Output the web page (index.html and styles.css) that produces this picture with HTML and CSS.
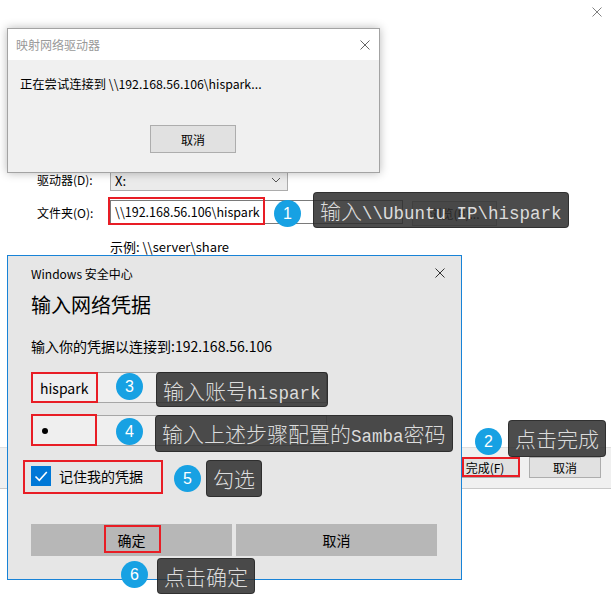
FILE: index.html
```html
<!DOCTYPE html>
<html lang="zh-CN">
<head>
<meta charset="utf-8">
<title>映射网络驱动器</title>
<link rel="stylesheet" href="styles.css">
</head>
<body>
<div class="wizard">
  <div class="wiz-titlebar">
    <svg class="x-icon" viewBox="0 0 10 10"><path d="M0.5 0.5 L9.5 9.5 M9.5 0.5 L0.5 9.5" stroke="#808080" stroke-width="1" fill="none"/></svg>
  </div>
  <div class="wiz-content">
    <div class="wiz-row drive-row">
      <span class="wiz-label">驱动器(D):</span>
      <div class="select"><span>X:</span><svg class="chev" viewBox="0 0 10 6"><path d="M1 1 L5 5 L9 1" stroke="#555" stroke-width="1" fill="none"/></svg></div>
    </div>
    <div class="wiz-row folder-row">
      <span class="wiz-label folder-label">文件夹(O):</span>
      <div class="folder-input">\\192.168.56.106\hispark</div>
      <div class="win-btn browse">浏览(B)...</div>
    </div>
    <div class="wiz-example">示例: \\server\share</div>
  </div>
  <div class="wiz-footer">
    <div class="win-btn foot-btn finish-btn">完成(F)</div>
    <div class="win-btn foot-btn">取消</div>
  </div>
</div>

<div class="connect-dialog">
  <div class="cd-titlebar">
    <span>映射网络驱动器</span>
    <svg class="x-icon" viewBox="0 0 10 10"><path d="M0.5 0.5 L9.5 9.5 M9.5 0.5 L0.5 9.5" stroke="#666" stroke-width="1" fill="none"/></svg>
  </div>
  <div class="cd-body">
    <div class="cd-msg">正在尝试连接到 \\192.168.56.106\hispark...</div>
    <div class="win-btn cd-btn">取消</div>
  </div>
</div>

<div class="cred">
  <div class="cred-title-row">
    <span>Windows 安全中心</span>
    <svg class="x-icon" viewBox="0 0 10 10"><path d="M0.5 0.5 L9.5 9.5 M9.5 0.5 L0.5 9.5" stroke="#333" stroke-width="1" fill="none"/></svg>
  </div>
  <div class="cred-heading">输入网络凭据</div>
  <div class="cred-sub">输入你的凭据以连接到:192.168.56.106</div>
  <div class="cred-input">hispark</div>
  <div class="cred-input"><span class="pw-dot"></span></div>
  <div class="remember">
    <svg class="checkbox" viewBox="0 0 20 20"><rect width="20" height="20" fill="#0078d7"/><path d="M4.5 10.5 L8.3 14.3 L15.8 6" stroke="#fff" stroke-width="1.6" fill="none"/></svg>
    <span>记住我的凭据</span>
  </div>
  <div class="cred-buttons">
    <div class="cred-btn">确定</div>
    <div class="cred-btn">取消</div>
  </div>
</div>

<div class="mark mark-folder"></div>
<div class="mark mark-user"></div>
<div class="mark mark-pw"></div>
<div class="mark mark-finish"></div>
<div class="mark mark-remember"></div>
<div class="mark mark-ok"></div>

<div class="badge badge-1">1</div>
<div class="badge badge-2">2</div>
<div class="badge badge-3">3</div>
<div class="badge badge-4">4</div>
<div class="badge badge-5">5</div>
<div class="badge badge-6">6</div>

<div class="tip tip-1">输入<span class="lat">\\Ubuntu IP\hispark</span></div>
<div class="tip tip-2">点击完成</div>
<div class="tip tip-3">输入账号<span class="lat">hispark</span></div>
<div class="tip tip-4">输入上述步骤配置的<span class="lat">Samba</span>密码</div>
<div class="tip tip-5">勾选</div>
<div class="tip tip-6">点击确定</div>
</body>
</html>
```
FILE: styles.css
```css
* { box-sizing: border-box; }
html, body { margin: 0; padding: 0; }
body {
  width: 611px;
  height: 606px;
  overflow: hidden;
  position: relative;
  background: #fff;
  color: #000;
  font-family: "Noto Sans CJK SC", "Noto Sans", sans-serif;
}
.x-icon { width: 10px; height: 10px; display: block; }

/* background wizard window */
.wizard { width: 611px; height: 489px; display: flex; flex-direction: column; }
.wiz-titlebar { height: 24px; display: flex; justify-content: flex-end; align-items: center; padding-right: 9px; }
.wiz-content { padding: 145px 0 0 37px; font-size: 12px; display: flex; flex-direction: column; }
.wiz-row { display: flex; align-items: flex-start; }
.wiz-label { width: 73px; line-height: 22px; }
.select {
  width: 178px; height: 22px;
  border: 1px solid #acacac; background: #ebebeb;
  display: flex; justify-content: space-between; align-items: center;
  padding: 0 6px 0 4px; font-size: 13px;
}
.chev { width: 10px; height: 6px; display: block; }
.folder-row { margin-top: 9px; }
.folder-label { line-height: 24px; padding-top: 1px; }
.folder-input {
  width: 293px; height: 24px;
  border: 1px solid #7a7a7a; background: #fff;
  font-size: 12.5px; line-height: 22px; padding-left: 4px;
}
.win-btn {
  background: #e1e1e1; border: 1px solid #adadad;
  display: flex; align-items: center; justify-content: center;
  font-size: 12px;
}
.browse { margin-left: 9px; margin-top: 1px; width: 85px; height: 25px; }
.wiz-example { margin-top: 12px; padding-left: 73px; line-height: 18px; font-size: 13px; }
.wiz-footer {
  margin-top: auto; height: 42px;
  background: #f0f0f0;
  border-top: 1px solid #dfdfdf; border-bottom: 1px solid #c9c9c9;
  display: flex; justify-content: flex-end; align-items: flex-start; gap: 9px;
  padding: 9px 10px 0 0;
}
.foot-btn { width: 72px; height: 21px; }
.finish-btn { width: 70px; }

/* connecting dialog */
.connect-dialog {
  position: absolute; left: 7px; top: 28px;
  width: 373px; height: 145px;
  border: 1px solid #a3a3a3;
  box-shadow: 0 0 9px rgba(0,0,0,0.28);
  display: flex; flex-direction: column;
  background: #f0f0f0;
}
.cd-titlebar {
  height: 31px; background: #fff;
  display: flex; justify-content: space-between; align-items: center;
  padding: 0 9px 0 8px; font-size: 12px; color: #999;
}
.cd-body { flex: 1; padding: 15px 0 0 12px; display: flex; flex-direction: column; }
.cd-msg { font-size: 12.3px; line-height: 18px; }
.cd-btn { align-self: center; margin: 32px 0 0 -13px; width: 86px; height: 28px; }

/* credentials dialog */
.cred {
  position: absolute; left: 7px; top: 255px;
  width: 455px;
  border: 1px solid #1883d7;
  background: #e6e6e6;
  padding: 8px 16px 23px 23px;
  display: flex; flex-direction: column;
}
.cred-title-row { height: 18px; display: flex; justify-content: space-between; align-items: center; font-size: 12px; }
.cred-heading { margin-top: 9px; font-size: 20px; line-height: 28px; }
.cred-sub { margin-top: 17px; font-size: 14px; line-height: 20px; }
.cred-input {
  margin-top: 16px; width: 296px; height: 31px;
  background: #efefef; border: 1px solid #a6a6a6;
  font-size: 14px; padding-left: 8px;
  display: flex; align-items: center;
}
.cred-input + .cred-input { margin-top: 12px; }
.pw-dot { width: 6px; height: 6px; border-radius: 50%; background: #000; margin-left: 2px; }
.remember { margin-top: 19px; height: 21px; display: flex; align-items: center; gap: 8px; font-size: 14px; }
.checkbox { width: 20px; height: 20px; display: block; }
.cred-buttons { margin-top: 38px; display: flex; gap: 4px; }
.cred-btn {
  width: 201px; height: 32px; background: #b7b7b7;
  display: flex; align-items: center; justify-content: center; font-size: 14px;
}

/* annotations */
.mark { position: absolute; border: 2px solid #e81d25; }
.mark-folder { left: 108px; top: 197px; width: 157px; height: 28px; }
.mark-user { left: 31px; top: 372px; width: 67px; height: 31px; }
.mark-pw { left: 31px; top: 414px; width: 66px; height: 32px; }
.mark-finish { left: 462px; top: 457px; width: 58px; height: 20px; }
.mark-remember { left: 23px; top: 460px; width: 140px; height: 34px; }
.mark-ok { left: 104px; top: 525px; width: 57px; height: 28px; }

.badge {
  position: absolute; width: 27px; height: 27px; border-radius: 50%;
  background: #17a1e3; color: #fff;
  font-family: "Liberation Sans", Arial, sans-serif; font-size: 16px;
  display: flex; align-items: center; justify-content: center;
}
.badge-1 { left: 274px; top: 200px; }
.badge-2 { left: 475px; top: 428px; }
.badge-3 { left: 116px; top: 373px; }
.badge-4 { left: 116px; top: 418px; }
.badge-5 { left: 174px; top: 465px; }
.badge-6 { left: 121px; top: 561px; }

.tip {
  position: absolute; height: 36px;
  background: rgba(45,45,45,0.85);
  border: 1px solid rgba(20,20,20,0.5);
  border-radius: 4px;
  color: #dcdcdc;
  font-family: "Noto Sans CJK SC", sans-serif; font-size: 21px; font-weight: 300; line-height: 34px;
  padding: 0 6px; white-space: nowrap;
}
.tip .lat { font-family: "Liberation Mono", "DejaVu Sans Mono", monospace; font-size: 17.5px; font-weight: 400; }
.tip-1 { left: 313px; top: 192px; }
.tip-2 { left: 508px; top: 420px; height: 37px; }
.tip-3 { left: 156px; top: 372px; height: 35px; }
.tip-4 { left: 155px; top: 415px; height: 37px; }
.tip-5 { left: 206px; top: 460px; height: 37px; }
.tip-6 { left: 157px; top: 558px; }
```
